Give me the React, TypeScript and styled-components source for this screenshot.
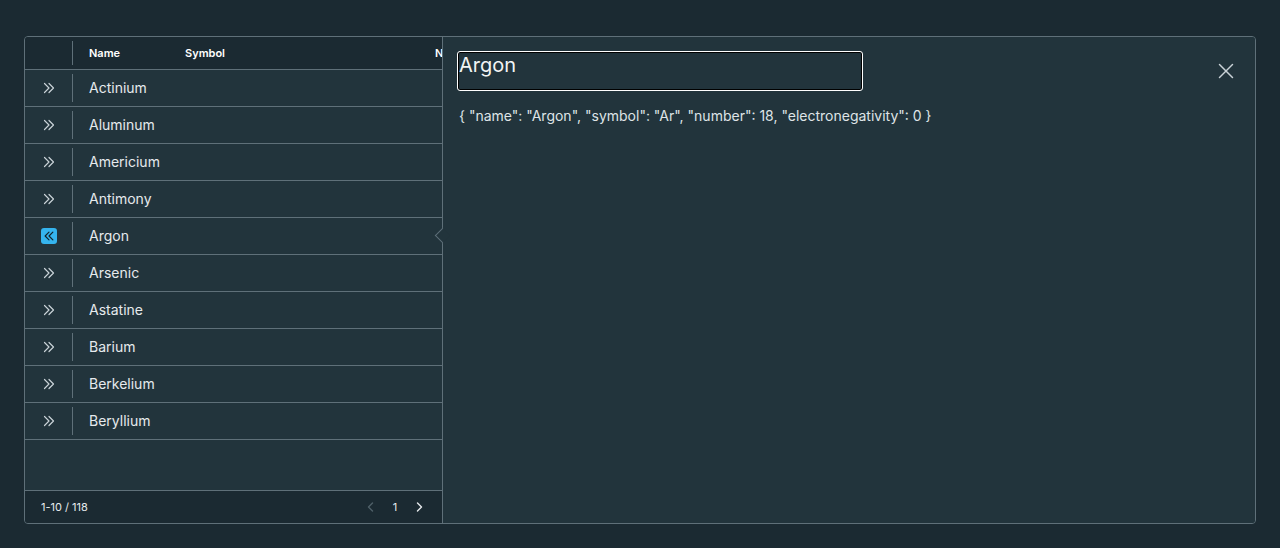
import React from "react";
import styled, { createGlobalStyle } from "styled-components";

const GlobalStyle = createGlobalStyle`
  html, body { margin: 0; padding: 0; background: #1b2a32; }
  body { font-family: Inter, "Noto Sans", sans-serif; color: #e9ecef; }
  * { box-sizing: border-box; }
`;

const BORDER = "#5f7079";
const PANE = "#22343c";
const DARK = "#1b2a32";

const Page = styled.div`
  padding: 36px 24px 24px 24px;
  width: 1280px;
  height: 548px;
`;

const Grid = styled.div`
  display: flex;
  height: 488px;
  border: 1px solid ${BORDER};
  border-radius: 4px;
  background: ${PANE};
  overflow: hidden;
`;

const TableArea = styled.div`
  width: 417px;
  flex: none;
  display: flex;
  flex-direction: column;
  overflow: hidden;
`;

const HeaderRow = styled.div`
  display: flex;
  height: 33px;
  flex: none;
  background: ${DARK};
  border-bottom: 1px solid ${BORDER};
  white-space: nowrap;
`;

const ExpandCell = styled.div`
  width: 48px;
  flex: none;
  display: flex;
  align-items: center;
  justify-content: center;
  position: relative;
  &::after {
    content: "";
    position: absolute;
    right: 0;
    top: 4px;
    bottom: 4px;
    width: 1px;
    background: ${BORDER};
  }
`;

const HeadCell = styled.div<{ $w?: number }>`
  width: ${(p) => (p.$w ? `${p.$w}px` : "auto")};
  flex: ${(p) => (p.$w ? "none" : "1")};
  min-width: 0;
  overflow: hidden;
  display: flex;
  align-items: center;
  font-size: 11px;
  font-weight: 600;
  color: #ffffff;
  padding-left: 16px;
  padding-bottom: 1px;
`;

const Row = styled.div`
  display: flex;
  height: 37px;
  flex: none;
  border-bottom: 1px solid ${BORDER};
`;

const NameCell = styled.div`
  display: flex;
  align-items: center;
  padding-left: 16px;
  padding-bottom: 2px;
  font-size: 14px;
  color: #e6eaed;
`;

const Spacer = styled.div`
  flex: 1;
  border-bottom: 1px solid ${BORDER};
`;

const Footer = styled.div`
  height: 32px;
  flex: none;
  background: ${DARK};
  display: flex;
  align-items: center;
  justify-content: space-between;
  padding: 0 17px 0 16px;
  font-size: 11px;
  color: #e6eaed;
`;

const Pager = styled.div`
  display: flex;
  align-items: center;
  gap: 12px;
`;

const PageNum = styled.span`
  font-size: 11px;
  width: 12px;
  text-align: center;
`;

const SelectedBox = styled.div`
  width: 16px;
  height: 16px;
  border-radius: 3px;
  background: #35b4ee;
  display: flex;
  align-items: center;
  justify-content: center;
`;

const Pane = styled.div`
  flex: 1;
  position: relative;
  border-left: 1px solid ${BORDER};
  background: ${PANE};
  padding: 14px 20px 0 14px;
`;

const Caret = styled.div<{ $top: number }>`
  position: absolute;
  left: -6px;
  top: ${(p) => p.$top}px;
  width: 11px;
  height: 11px;
  background: ${PANE};
  border-left: 1px solid ${BORDER};
  border-bottom: 1px solid ${BORDER};
  transform: rotate(45deg);
`;

const PaneHeader = styled.div`
  display: flex;
  align-items: flex-start;
  justify-content: space-between;
`;

const Title = styled.h3`
  margin: 0;
  width: 406px;
  height: 40px;
  border: 1px solid #ffffff;
  border-radius: 3px;
  box-shadow: inset 0 0 0 1px #000000;
  padding: 0 0 0 1px;
  font-size: 20px;
  font-weight: 400;
  line-height: 26px;
  color: #f2f4f5;
`;

const CloseBtn = styled.button`
  margin-top: 11px;
  background: none;
  border: none;
  padding: 0;
  width: 18px;
  height: 18px;
  display: flex;
  align-items: center;
  justify-content: center;
  cursor: pointer;
`;

const Json = styled.div`
  margin-top: 16px;
  padding-left: 2px;
  font-size: 14px;
  color: #dfe4e7;
`;

const DoubleRight = ({ color = "#c9d2d7" }: { color?: string }) => (
  <svg width="14" height="14" viewBox="0 0 14 14" fill="none" stroke={color} strokeWidth="1.2" strokeLinecap="round" strokeLinejoin="round">
    <path d="M2.5 2.5 L7 7 L2.5 11.5" />
    <path d="M7 2.5 L11.5 7 L7 11.5" />
  </svg>
);

const DoubleLeft = ({ color = "#14232a" }: { color?: string }) => (
  <svg width="12" height="12" viewBox="0 0 14 14" fill="none" stroke={color} strokeWidth="1.4" strokeLinecap="round" strokeLinejoin="round">
    <path d="M7 2.5 L2.5 7 L7 11.5" />
    <path d="M11.5 2.5 L7 7 L11.5 11.5" />
  </svg>
);

const Chevron = ({ dir, color }: { dir: "left" | "right"; color: string }) => (
  <svg width="12" height="12" viewBox="0 0 12 12" fill="none" stroke={color} strokeWidth="1.4" strokeLinecap="round" strokeLinejoin="round">
    {dir === "left" ? <path d="M7.5 2 L3.5 6 L7.5 10" /> : <path d="M4.5 2 L8.5 6 L4.5 10" />}
  </svg>
);

const CloseIcon = () => (
  <svg width="16" height="16" viewBox="0 0 16 16" fill="none" stroke="#c9d2d7" strokeWidth="1.5" strokeLinecap="round">
    <path d="M1.5 1.5 L14.5 14.5" />
    <path d="M14.5 1.5 L1.5 14.5" />
  </svg>
);

const elements = [
  "Actinium",
  "Aluminum",
  "Americium",
  "Antimony",
  "Argon",
  "Arsenic",
  "Astatine",
  "Barium",
  "Berkelium",
  "Beryllium",
];

const selected = "Argon";

export default function App() {
  const selIndex = elements.indexOf(selected);
  return (
    <>
      <GlobalStyle />
      <Page>
        <Grid>
          <TableArea>
            <HeaderRow>
              <ExpandCell />
              <HeadCell $w={96}>Name</HeadCell>
              <HeadCell $w={250}>Symbol</HeadCell>
              <HeadCell>Number</HeadCell>
            </HeaderRow>
            {elements.map((el) => (
              <Row key={el}>
                <ExpandCell>
                  {el === selected ? (
                    <SelectedBox>
                      <DoubleLeft />
                    </SelectedBox>
                  ) : (
                    <DoubleRight />
                  )}
                </ExpandCell>
                <NameCell>{el}</NameCell>
              </Row>
            ))}
            <Spacer />
            <Footer>
              <span>1-10 / 118</span>
              <Pager>
                <Chevron dir="left" color="#4f6069" />
                <PageNum>1</PageNum>
                <Chevron dir="right" color="#e6eaed" />
              </Pager>
            </Footer>
          </TableArea>
          <Pane>
            <Caret style={{ top: 33 + selIndex * 37 + 18 - 6 }} />
            <PaneHeader>
              <Title tabIndex={-1}>Argon</Title>
              <CloseBtn aria-label="Close">
                <CloseIcon />
              </CloseBtn>
            </PaneHeader>
            <Json>{'{ "name": "Argon", "symbol": "Ar", "number": 18, "electronegativity": 0 }'}</Json>
          </Pane>
        </Grid>
      </Page>
    </>
  );
}
